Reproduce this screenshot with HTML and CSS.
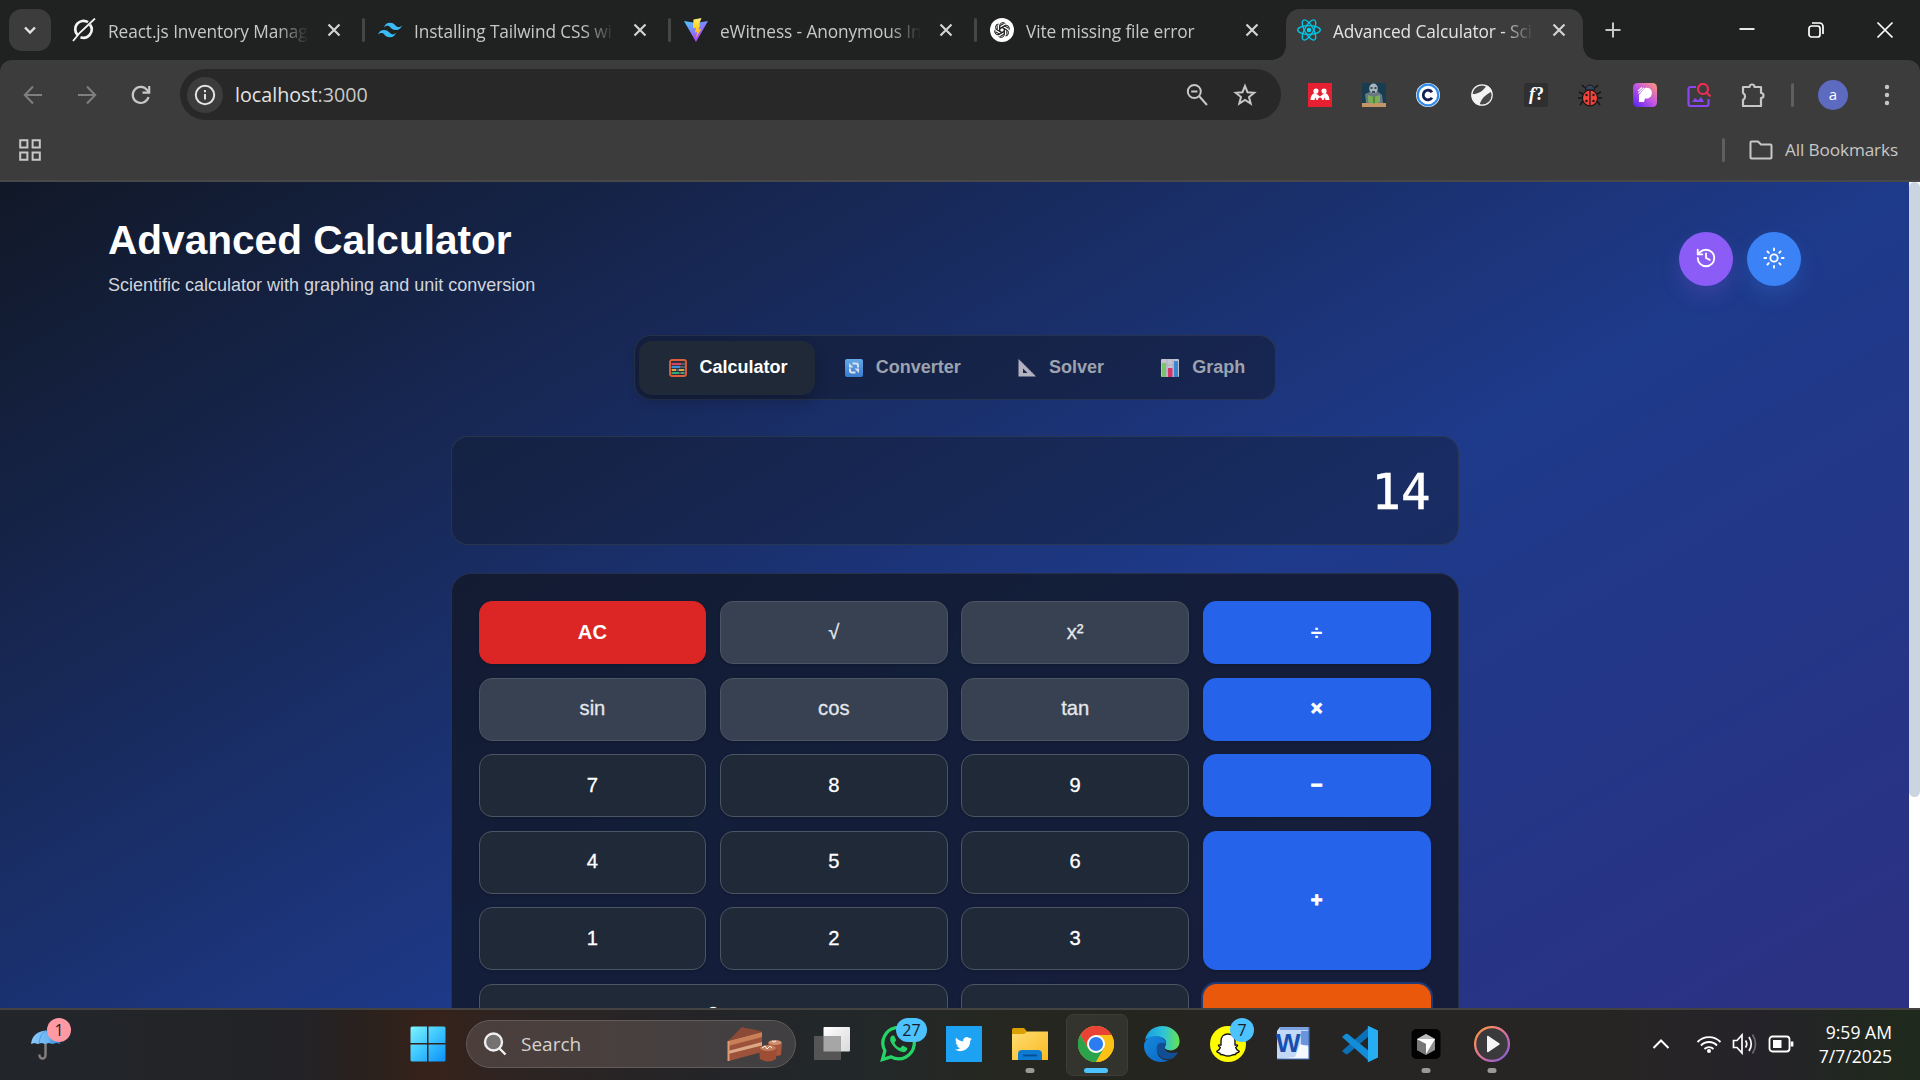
FILE: index.html
```html
<!DOCTYPE html>
<html lang="en">
<head>
<meta charset="utf-8">
<title>Advanced Calculator</title>
<link rel="stylesheet" href="styles.css">
</head>
<body>
<div class="screen">
  <header class="browser">
    <div class="tabstrip">
      <div class="tab-search"><svg width="16" height="16" viewBox="0 0 16 16" fill="none" stroke="#e3e3e3" stroke-width="2.4"><path d="M3 5.5l5 5 5-5"/></svg></div>
      <div class="tab">
        <svg class="favicon" viewBox="0 0 24 24" fill="none" stroke="#f4f4f4" stroke-width="2.7"><path d="M18 6.6a8.3 8.3 0 0 1-9.5 12.7M5.6 17A8.3 8.3 0 0 1 16 4.2"/><path d="M1 23L8 14.500 23 0.500" stroke-width="1.8"/></svg>
        <span class="tab-title">React.js Inventory Manag</span>
        <svg class="close" viewBox="0 0 24 24"><path d="M6.500 6.500l11 11m0-11l-11 11"/></svg>
      </div>
      <div class="tab">
        <svg class="favicon" viewBox="0 0 24 24" fill="#38bdf8"><path d="M12 4.800c-3.200 0-5.200 1.600-6 4.800 1.200-1.600 2.600-2.200 4.200-1.800.9.2 1.600.9 2.300 1.700 1.200 1.200 2.600 2.600 5.500 2.600 3.200 0 5.200-1.600 6-4.800-1.200 1.600-2.600 2.200-4.200 1.800-.9-.2-1.600-.9-2.300-1.700-1.200-1.200-2.600-2.600-5.500-2.600zM6 12c-3.200 0-5.200 1.600-6 4.800 1.200-1.600 2.600-2.200 4.200-1.800.9.2 1.600.9 2.300 1.700 1.200 1.200 2.600 2.600 5.500 2.600 3.200 0 5.200-1.600 6-4.800-1.200 1.600-2.600 2.200-4.200 1.800-.9-.2-1.600-.9-2.300-1.700C10.300 13.400 8.900 12 6 12z"/></svg>
        <span class="tab-title">Installing Tailwind CSS wi</span>
        <svg class="close" viewBox="0 0 24 24"><path d="M6.500 6.500l11 11m0-11l-11 11"/></svg>
      </div>
      <div class="tab">
        <svg class="favicon" viewBox="0 0 24 24"><defs><linearGradient id="vite" x1="0" y1="0" x2=".6" y2="1"><stop offset="0" stop-color="#41d1ff"/><stop offset="1" stop-color="#bd34fe"/></linearGradient><linearGradient id="bolt" x1="0" y1="0" x2="0" y2="1"><stop offset="0" stop-color="#ffea83"/><stop offset=".3" stop-color="#ffdd35"/><stop offset="1" stop-color="#ffa800"/></linearGradient></defs><path d="M0 3l12 21L24 3l-12 2z" fill="url(#vite)"/><path d="M17.500 0L9.500 1.600 9 10.300l3-.5-1 4.800 2.300-.6-1.500 6L17.300 11l-2.800.5L16 6.800l-1-.2z" fill="url(#bolt)"/></svg>
        <span class="tab-title">eWitness - Anonymous In</span>
        <svg class="close" viewBox="0 0 24 24"><path d="M6.500 6.500l11 11m0-11l-11 11"/></svg>
      </div>
      <div class="tab tab-last">
        <svg class="favicon" viewBox="0 0 24 24"><circle cx="12" cy="12" r="12" fill="#fff"/><g fill="none" stroke="#222" stroke-width="1"><path id="petal" d="M9.600 13.400V7.600a3.300 3.300 0 0 1 6-1.600M12 9.500l4.800 2.800v4.500"/><use href="#petal" transform="rotate(60 12 12)"/><use href="#petal" transform="rotate(120 12 12)"/><use href="#petal" transform="rotate(180 12 12)"/><use href="#petal" transform="rotate(240 12 12)"/><use href="#petal" transform="rotate(300 12 12)"/></g></svg>
        <span class="tab-title">Vite missing file error</span>
        <svg class="close" viewBox="0 0 24 24"><path d="M6.500 6.500l11 11m0-11l-11 11"/></svg>
      </div>
      <div class="tab tab-active">
        <svg class="favicon" viewBox="0 0 24 24" fill="none" stroke="#00c8e6" stroke-width="1.300"><circle cx="12" cy="12" r="2.200" fill="#00d8ff" stroke="none"/><ellipse cx="12" cy="12" rx="11.300" ry="4.300"/><ellipse cx="12" cy="12" rx="11.300" ry="4.300" transform="rotate(60 12 12)"/><ellipse cx="12" cy="12" rx="11.300" ry="4.300" transform="rotate(120 12 12)"/></svg>
        <span class="tab-title">Advanced Calculator - Sci</span>
        <svg class="close" viewBox="0 0 24 24"><path d="M6.500 6.500l11 11m0-11l-11 11"/></svg>
      </div>
      <svg class="new-tab" width="24" height="24" viewBox="0 0 24 24" stroke="#c7c7c7" stroke-width="2"><path d="M12 4.500v15M4.500 12h15"/></svg>
      <div class="win-controls">
        <svg width="20" height="20" viewBox="0 0 20 20" fill="none" stroke="#fff" stroke-width="1.800"><path d="M2.500 9h15"/></svg>
        <svg width="20" height="20" viewBox="0 0 20 20" fill="none" stroke="#fff" stroke-width="1.700"><rect x="3" y="6" width="11" height="11" rx="2.500"/><path d="M6 3h7.500a3.500 3.500 0 0 1 3.500 3.500V14"/></svg>
        <svg width="20" height="20" viewBox="0 0 20 20" fill="none" stroke="#fff" stroke-width="1.700"><path d="M2.500 2.500l15 15m0-15l-15 15"/></svg>
      </div>
    </div>
    <div class="toolbar">
      <div class="address-row">
        <div class="nav-buttons">
          <svg width="24" height="24" viewBox="0 0 24 24" fill="none" stroke="#7f7f7f" stroke-width="2"><path d="M21 12H4M12 3.500L3.800 12l8.200 8.500"/></svg>
          <svg width="24" height="24" viewBox="0 0 24 24" fill="none" stroke="#7f7f7f" stroke-width="2"><path d="M3 12h17M12 3.500l8.200 8.500-8.200 8.500"/></svg>
          <svg width="24" height="24" viewBox="0 0 24 24" fill="none" stroke="#c7c7c7" stroke-width="2.200"><path d="M19.500 14a8 8 0 1 1-1.300-6.800l1.500 2"/><path d="M20.200 3v6.600h-6.700"/></svg>
        </div>
        <div class="omnibox">
          <span class="site-info"><svg width="22" height="22" viewBox="0 0 22 22" fill="none" stroke="#e3e3e3" stroke-width="2"><circle cx="11" cy="11" r="9.200"/><path d="M11 10v5.500M11 6v2.200"/></svg></span>
          <span class="url">localhost<span class="port">:3000</span></span>
          <svg class="zoom-icon" width="24" height="24" viewBox="0 0 24 24" fill="none" stroke="#c7c7c7" stroke-width="2"><circle cx="9.300" cy="8.500" r="6.500"/><path d="M6.200 8.500h6.200M14 13l8 9"/></svg>
          <svg width="24" height="24" viewBox="0 0 24 24" fill="none" stroke="#c7c7c7" stroke-width="2"><path d="M12 3l2.500 6.200 6.700.5-5.200 4.300 1.700 6.600L12 17l-5.700 3.600L8 14 2.800 9.700l6.700-.5z"/></svg>
        </div>
        <div class="extensions">
          <svg viewBox="0 0 24 24"><rect width="24" height="24" fill="#e61f31"/><g fill="#fff"><circle cx="8" cy="8" r="2.600"/><circle cx="16" cy="8" r="2.600"/><path d="M2.500 17c.3-4 2-7 5-7l4.500 3.500 4.500-3.500c3 0 4.700 3 5 7h-4l-.8-2.500-1.200 2.500h-7l-1.200-2.500L6.500 17z"/></g><circle cx="12" cy="9.800" r="1.700" fill="#e61f31"/><path d="M9.800 17.200c0-3.500 4.400-3.500 4.400 0z" fill="#e61f31"/></svg>
          <svg viewBox="0 0 24 24"><rect width="24" height="24" fill="#183c50"/><path d="M0 20h24v4H0z" fill="#c69566"/><path d="M3 11l7-3h5l5 4 1 8H4z" fill="#687884"/><ellipse cx="11.500" cy="5.500" rx="4.300" ry="5" fill="#a5b4bd"/><path d="M8.500 5h2m2 0h2M10 9h3" stroke="#182630" stroke-width="1.400"/><path d="M6 12l6 2 6-2v7l-6 2-6-2z" fill="#7aae56"/><path d="M12 14v6" stroke="#315e2a"/></svg>
          <svg viewBox="0 0 24 24"><circle cx="12" cy="12" r="12" fill="#fff"/><circle cx="12" cy="12" r="10.300" fill="#fff" stroke="#2f8ced" stroke-width="2.200"/><path d="M16 9.300a4.800 4.800 0 1 0 0 5.400" fill="none" stroke="#14204f" stroke-width="2.800"/></svg>
          <svg viewBox="0 0 24 24"><circle cx="12" cy="12" r="10.200" fill="#484848" stroke="#f3f3f3" stroke-width="1.200"/><path d="M1.500 11C7 11.500 13 9 16.500 2.300a10.700 10.700 0 0 1 5.500 6.200C15 12 11 16 9.500 22.400A10.700 10.700 0 0 1 1.500 11z" fill="#f3f3f3"/></svg>
          <span class="fx"><i>f</i>?</span>
          <svg viewBox="0 0 24 24"><path d="M7 5L4 2m13 3l3-3M5 11l-4-2m18 2l4-2M4 15H0m20 0h4M5 18l-3 4m17-4l3 4" stroke="#161616" stroke-width="1.600"/><path d="M7.500 7a4.500 5 0 0 1 9 0z" fill="#344461" stroke="#151515"/><ellipse cx="12" cy="15" rx="7.600" ry="8" fill="#f5433e" stroke="#151515" stroke-width="1.200"/><path d="M12 7v16" stroke="#151515" stroke-width="1.200"/><g fill="#181818"><circle cx="8.500" cy="12" r="1.200"/><circle cx="15.500" cy="12" r="1.200"/><circle cx="8.500" cy="18" r="1.200"/><circle cx="15.500" cy="18" r="1.200"/></g></svg>
          <svg viewBox="0 0 24 24"><defs><linearGradient id="pinkish" x1="0" y1="1" x2="1" y2="0"><stop offset="0" stop-color="#5321f5"/><stop offset=".5" stop-color="#c155e5"/><stop offset="1" stop-color="#ff9873"/></linearGradient></defs><rect width="24" height="24" rx="4.500" fill="url(#pinkish)"/><path d="M6 12l6-7c5-1 8 3 6.500 7-1 3-4 4-6.500 3.500L11 19H6z" fill="#fff"/><path d="M5 8l4-3.500M5.500 10.500L11 5" stroke="#fff" stroke-width="1.200"/></svg>
          <svg viewBox="0 0 24 24" fill="none" stroke-width="2.200"><path d="M9 4H3.500A2 2 0 0 0 1.500 6v15a2 2 0 0 0 2 2h16a2 2 0 0 0 2-2v-5" stroke="#8b45f5"/><path d="M5 19l3-4 3 2.500 3-3.500 3 5z" fill="#8b45f5"/><circle cx="16" cy="6" r="5" stroke="#f32a55"/><path d="M19.500 9.500l4 4" stroke="#f32a55"/></svg>
          <svg viewBox="0 0 24 24" fill="none" stroke="#c7c7c7" stroke-width="2.200" stroke-linejoin="round"><path d="M2 4h6.500a2.500 2.500 0 0 1 5 0H20v6a2.500 2.500 0 0 1 0 5v8H2v-6a4 4 0 0 0 0-7z"/></svg>
        </div>
        <span class="vbar"></span>
        <span class="avatar">a</span>
        <svg class="menu" width="6" height="24" viewBox="0 0 6 24" fill="#c7c7c7"><circle cx="3" cy="4" r="2.200"/><circle cx="3" cy="12" r="2.200"/><circle cx="3" cy="20" r="2.200"/></svg>
      </div>
      <div class="bookmarks">
        <svg width="22" height="22" viewBox="0 0 22 22" fill="none" stroke="#c7c7c7" stroke-width="2"><path d="M1.200 1.200h7.200v7.200H1.200zM13.600 1.200h7.200v7.200h-7.200zM1.200 13.600h7.200v7.200H1.200zM13.600 13.600h7.200v7.200h-7.200z"/></svg>
        <span class="vbar push"></span>
        <svg class="folder" width="24" height="20" viewBox="0 0 24 20" fill="none" stroke="#c7c7c7" stroke-width="2" stroke-linejoin="round"><path d="M1.500 2.500a1 1 0 0 1 1-1h6.500l3 3h9.500a1 1 0 0 1 1 1v12a1 1 0 0 1-1 1h-19a1 1 0 0 1-1-1z"/></svg>
        <span class="all-bookmarks">All Bookmarks</span>
      </div>
    </div>
  </header>

  <div class="viewport">
    <main class="app">
      <div class="app-header">
        <div>
          <h1>Advanced Calculator</h1>
          <p class="subtitle">Scientific calculator with graphing and unit conversion</p>
        </div>
        <div class="actions">
          <button class="round history"><svg viewBox="0 0 24 24"><path d="M3 12a9 9 0 1 0 9-9 9.750 9.750 0 0 0-6.740 2.740L3 8"/><path d="M3 3v5h5M12 7v5l4 2"/></svg></button>
          <button class="round theme"><svg viewBox="0 0 24 24"><circle cx="12" cy="12" r="4"/><path d="M12 1.500v2M12 20.500v2M4.900 4.900l1.400 1.400M17.700 17.700l1.400 1.400M1.500 12h2M20.500 12h2M6.300 17.700l-1.400 1.400M19.100 4.900l-1.400 1.400"/></svg></button>
        </div>
      </div>
      <nav class="modes">
        <div class="mode mode-active"><svg viewBox="0 0 18 18"><rect x="1" y="1" width="16" height="16" rx="2" fill="#25303c" stroke="#f4633a" stroke-width="1.900"/><path d="M2 5h14M2 8h14M2 11h14M2 14h14" stroke="#8a8f9b"/><g stroke-width="2.200"><path d="M3 5h9" stroke="#e8476a"/><path d="M3 8h8" stroke="#3c9ce8"/><path d="M3 11h4m3 0h5" stroke="#f6b53c"/><path d="M3 14h7m2 0h3" stroke="#35b878"/></g></svg>Calculator</div>
        <div class="mode"><svg viewBox="0 0 18 18"><defs><linearGradient id="sq" x2="0" y2="1"><stop stop-color="#6db8fb"/><stop offset="1" stop-color="#3f86dd"/></linearGradient></defs><rect width="18" height="18" rx="2" fill="url(#sq)"/><path d="M13 8.500V6.500a2 2 0 0 0-2-2H7.500M5 9.500v2a2 2 0 0 0 2 2h3.500" fill="none" stroke="#f2f6ff" stroke-width="2"/><path d="M4 4v4.500h4.500zM14 14V9.500H9.500z" fill="#f2f6ff"/></svg>Converter</div>
        <div class="mode"><svg viewBox="0 0 18 18"><path d="M0.500 0l17.500 17.500H0.500zM5 9.500V14h4.500z" fill="#c4c2cd" fill-rule="evenodd"/><path d="M3 2.500l13 13" stroke="#9a92b5" stroke-width="1" stroke-dasharray="1 1.500"/></svg>Solver</div>
        <div class="mode"><svg viewBox="0 0 18 18"><rect width="18" height="18" rx="1" fill="#d6d4df"/><path d="M0 6h18M0 12h18M6 0v18M12 0v18" stroke="#b3b0c2" stroke-width=".6"/><path d="M1 4h4v14H1z" fill="#86d56c"/><path d="M7 9h4.500v9H7z" fill="#e8386b"/><path d="M13 2h4v16h-4z" fill="#3d92df"/></svg>Graph</div>
      </nav>
      <section class="display">14</section>
      <section class="keypad">
        <button class="key clear">AC</button><button class="key fn">√</button><button class="key fn">x²</button><button class="key op divide">÷</button>
        <button class="key fn">sin</button><button class="key fn">cos</button><button class="key fn">tan</button><button class="key op">×</button>
        <button class="key">7</button><button class="key">8</button><button class="key">9</button><button class="key op">−</button>
        <button class="key">4</button><button class="key">5</button><button class="key">6</button><button class="key op tall">+</button>
        <button class="key">1</button><button class="key">2</button><button class="key">3</button>
        <button class="key wide">0</button><button class="key">.</button><button class="key equals">=</button>
      </section>
    </main>
    <div class="scrollbar"><div class="thumb"></div></div>
  </div>

  <footer class="taskbar">
    <div class="weather">
      <svg width="34" height="34" viewBox="0 0 34 34"><defs><linearGradient id="umb"><stop stop-color="#8ccaf8"/><stop offset=".6" stop-color="#69b4f2"/><stop offset="1" stop-color="#1479dd"/></linearGradient></defs><path d="M15.500 14v14.500a3 3 0 0 1-6 0v-1" fill="none" stroke="#85807f" stroke-width="2.400"/><path d="M1 17C2 8 8 4.500 15.500 3.500 24 4.500 29 9 30.500 17l-4-1-4 1-3.500-1-4 1-3.500-1-4 1-3-1z" fill="url(#umb)"/><path d="M15.500 4c-5 3-6 8-6 12m6-12c4 3 6 8 6 12" fill="none" stroke="#4b9ce4"/></svg>
      <span class="badge pink">1</span>
    </div>
    <svg class="start" width="36" height="36" viewBox="0 0 36 36"><defs><linearGradient id="win" x1="0" y1="0" x2="36" y2="36" gradientUnits="userSpaceOnUse"><stop stop-color="#80f5ff"/><stop offset=".5" stop-color="#3cc5ff"/><stop offset="1" stop-color="#0b8ffa"/></linearGradient></defs><path d="M2 .5h15v16.500H.5V2A1.500 1.500 0 0 1 2 .5zM18.500.5H34A1.500 1.500 0 0 1 35.500 2v15h-17zM.5 18.500H17v17H2A1.500 1.500 0 0 1 .5 34zM18.500 18.500h17V34a1.500 1.500 0 0 1-1.500 1.500H18.500z" fill="url(#win)"/></svg>
    <div class="search">
      <svg width="24" height="24" viewBox="0 0 24 24" fill="#757170" stroke="#f0f0f0" stroke-width="2.400"><circle cx="10.500" cy="10" r="8.500"/><path d="M16.500 16.500l6 6"/></svg>
      <span>Search</span>
      <svg class="cake" width="56" height="36" viewBox="0 0 56 36"><path d="M1 15L35 6v20L2 35z" fill="#9c523b"/><path d="M1 15l34-9v5L1 20z" fill="#c98059"/><path d="M1 25l34-9v3.500L1 28z" fill="#dba886"/><path d="M1 15L15 1c6 2 14 2 20 5z" fill="#8b4936"/><path d="M1.500 15v20" stroke="#e09a73" stroke-width="2"/><path d="M41 17q7-4 14 0l-1 12q-6 2-12 0z" fill="#a9573c"/><ellipse cx="48" cy="16.500" rx="6.500" ry="2.500" fill="#cf9271"/><path d="M32 23q8-5 18 0l-1 10q-8 5-16 0z" fill="#9f4e36"/><ellipse cx="41" cy="22" rx="8" ry="3" fill="#c07c5c"/><path d="M35 22l3-2 2 3 3-3 2 2m0-7l2 1 2-1" fill="none" stroke="#fff0df"/></svg>
    </div>
    <div class="apps">
      <div class="app-slot"><svg viewBox="0 0 36 36"><defs><linearGradient id="tv" x2="1" y2="1"><stop stop-color="#fff"/><stop offset="1" stop-color="#d9d9d9"/></linearGradient></defs><rect x="9.500" y="1" width="26.500" height="24.500" rx="1" fill="url(#tv)"/><rect x="0" y="10" width="27" height="24" rx="1" fill="#555"/><path d="M9.500 10H27v15.500H9.500z" fill="#a6a6a6"/></svg></div>
      <div class="app-slot"><svg viewBox="0 0 36 36"><path d="M2.500 33.500l2.400-8.700a15.700 15.700 0 1 1 6.200 6.100z" fill="none" stroke="#25d366" stroke-width="3.300"/><path d="M12.600 9.500c-2.500 1-3.200 4-1.500 7 2.500 4.500 6.500 8.500 11.500 9.600 3 .5 4.500-1 4.700-4l-4.600-2.500-2.500 2.500c-2.800-1-4.700-3-5.800-5.400l1.800-2.400-2-4.500z" fill="#25d366"/></svg><span class="badge blue b27">27</span></div>
      <div class="app-slot"><svg viewBox="0 0 36 36"><path d="M0 0h36v36H0z" fill="#1da1f2"/><path d="M26 12.700c-.6.300-1.300.5-2 .6.700-.4 1.200-1.100 1.500-1.900-.7.400-1.400.7-2.200.8a3.500 3.500 0 0 0-6 3.200c-2.900-.2-5.400-1.500-7.100-3.600a3.500 3.500 0 0 0 1.100 4.700c-.6 0-1.100-.2-1.600-.4 0 1.700 1.200 3.100 2.800 3.400-.5.100-1 .1-1.600 0 .5 1.400 1.800 2.400 3.300 2.500A7 7 0 0 1 9 23.500a10 10 0 0 0 15.300-8.900c.7-.5 1.300-1.100 1.700-1.900z" fill="#fff"/></svg></div>
      <div class="app-slot"><svg viewBox="0 0 36 36"><defs><linearGradient id="fold" x2="1" y2="1"><stop stop-color="#ffdc71"/><stop offset="1" stop-color="#f9ba22"/></linearGradient></defs><path d="M0 3.500A1.500 1.500 0 0 1 1.500 2H12l3 3.500V12H0z" fill="#dba000"/><path d="M0 8h12l3.500-2.500H36V34H0z" fill="url(#fold)"/><path d="M6 28a4 4 0 0 1 4-4h16a4 4 0 0 1 4 4v6H6z" fill="#0d7bd2"/><path d="M11 29.500h14" stroke="#084b91" stroke-width="1.800"/></svg><i class="dot"></i></div>
      <div class="app-slot current"><svg viewBox="0 0 36 36"><circle cx="18" cy="18" r="18" fill="#fbc116"/><path d="M2.400 9A18 18 0 0 1 33.600 9H18L10.200 22.500z" fill="#ea4335"/><path d="M2.400 9A18 18 0 0 0 18 36l8-13.500H10.200z" fill="#2ba24c"/><path d="M33.600 9A18 18 0 0 1 18 36l7.800-13.500L18 9z" fill="#fbc116"/><circle cx="18" cy="18" r="9" fill="#fff"/><circle cx="18" cy="18" r="7.100" fill="#2b7cf0"/></svg><i class="bar"></i></div>
      <div class="app-slot"><svg viewBox="0 0 36 36"><defs><linearGradient id="edge1" x2="1"><stop stop-color="#159ce1"/><stop offset=".55" stop-color="#30c4d7"/><stop offset="1" stop-color="#68e34c"/></linearGradient><linearGradient id="edge2" y2="1"><stop stop-color="#1689dc"/><stop offset="1" stop-color="#0b66c5"/></linearGradient></defs><path d="M1 14C4-2 26-5 34 9c5 11-3 17-10 15-4-1-4-3-2-6 1-5-5-8-10-7C7 11 3 12 1 14z" fill="url(#edge1)"/><path d="M0 20c0-6 5-10 12-10 6 0 10 4 10 8-4-2-9 0-9 6 0 7 6 11 12 10C14 40 0 32 0 20z" fill="url(#edge2)"/><path d="M13 20c-2 8 5 15 14 13 3-1 6-4 7-7-5 2-10 1-13-2-1-2 0-3 1-5-3-3-7-3-9 1z" fill="#114e94"/></svg></div>
      <div class="app-slot"><svg viewBox="0 0 36 36"><circle cx="18" cy="18" r="18" fill="#fffc00"/><path d="M18 8c4.500 0 7 3 7 7v4c.8.200 2-.5 2.500.2.600 1-1.500 1.600-1.800 2.300.4 1.500 1.500 3 3.500 3.800-.2 1.300-2 1.500-3 1.800l-.7 1.400c-3-.5-3.500 1.500-7.500 1.500s-4.500-2-7.500-1.500l-.7-1.400c-1-.3-2.800-.5-3-1.800 2-.8 3.100-2.300 3.500-3.800-.3-.7-2.400-1.300-1.800-2.300.5-.7 1.700 0 2.500-.2v-4c0-4 2.500-7 7-7z" fill="#fff" stroke="#161616" stroke-width="1.400"/></svg><span class="badge blue b7">7</span></div>
      <div class="app-slot"><svg viewBox="0 0 36 36"><path d="M4 1h29v22l-3 10H1V5z" fill="#c3d7f6"/><path d="M4 1h29v3H4z" fill="#7ba2df"/><path d="M25 5h8v14h-8z" fill="#6d96da"/><path d="M2 33h31V21l-9-3-5 13z" fill="#f6f9ff"/><path d="M33 1v32H1" fill="none" stroke="#3f6fbd" stroke-width="1.200"/><text x="0" y="26" font-family="Liberation Sans, sans-serif" font-size="26" font-weight="bold" fill="#164fae">W</text></svg></div>
      <div class="app-slot"><svg viewBox="0 0 36 36"><path d="M0 25l3.500 3c1 .5 2 .3 3-.5L27 10V1z" fill="#0b70b7"/><path d="M0 11l3.500-3c1-.5 2-.3 3 .5L27 25v10z" fill="#138dd7"/><path d="M26.500 0L36 4.500v27L26.500 36c-.8 0-1.200-1-.5-1.800V1.800C25.300 1 25.700 0 26.500 0z" fill="#27adf3"/></svg></div>
      <div class="app-slot"><svg viewBox="0 0 36 36"><rect x="3.500" y="3" width="29" height="30" rx="5" fill="#020202"/><path d="M18 8l9 5v11l-9 5-9-5V13z" fill="#8e8e8e"/><path d="M9 13l9-5 9 5-9 4z" fill="#b9b9b9"/><path d="M9 13h18l-9 15V18z" fill="#fff"/><path d="M9 14v10l9 5V18z" fill="#777"/></svg><i class="dot"></i></div>
      <div class="app-slot"><svg viewBox="0 0 36 36"><defs><linearGradient id="play" x1="0" y1="0" x2="1" y2="1"><stop stop-color="#ff9b32"/><stop offset=".5" stop-color="#e3729a"/><stop offset="1" stop-color="#7859e0"/></linearGradient></defs><circle cx="18" cy="18" r="16.900" fill="#3a3a3d" stroke="url(#play)" stroke-width="2.300"/><path d="M13 10.500c0-.8.800-1 1.400-.6l10.800 7.300c.6.400.6 1.200 0 1.600l-10.800 7.300c-.6.400-1.400.1-1.400-.6z" fill="#f5f5f5"/></svg><i class="dot"></i></div>
    </div>
    <div class="tray">
      <svg class="chevron" width="18" height="12" viewBox="0 0 18 12" fill="none" stroke="#fff" stroke-width="2"><path d="M1.500 10L9 2.500l7.500 7.500"/></svg>
      <svg width="26" height="20" viewBox="0 0 26 20" fill="none" stroke="#fff" stroke-width="1.900"><path d="M1.500 8a16 16 0 0 1 23 0M5 11.500a11 11 0 0 1 16 0M8.500 15a6.300 6.300 0 0 1 9 0"/><circle cx="13" cy="17" r="2" fill="#fff" stroke="none"/></svg>
      <svg class="volume" width="26" height="22" viewBox="0 0 26 22" fill="none" stroke="#fff" stroke-width="1.700"><path d="M1.500 7.500h3.500l5-5.500v18l-5-5.500H1.500zM13.500 7.500q2.500 3.500 0 7M17 4q4.500 7 0 14"/><path d="M20.500 1.500q6 9.500 0 19" stroke="#6d6b6b"/></svg>
      <svg width="26" height="18" viewBox="0 0 26 18" fill="none" stroke="#fff" stroke-width="1.800"><rect x="1.500" y="1.500" width="20" height="15" rx="3"/><path d="M5 5h8.500v8H5z" fill="#fff" stroke="none"/><path d="M24 6.500v5" stroke-width="2.800"/></svg>
      <div class="clock"><span>9:59 AM</span><span>7/7/2025</span></div>
    </div>
  </footer>
</div>
</body>
</html>
```
FILE: styles.css
```css
* { box-sizing: border-box; }
body { margin: 0; background: #202221; font-family: "Open Sans", "Noto Sans", sans-serif; }
svg { display: block; flex: none; }
.screen { width: 1920px; height: 1080px; display: flex; flex-direction: column; overflow: hidden; }

/* Browser chrome */
.browser { flex: none; height: 182px; background: #202221; }
.tabstrip { height: 60px; display: flex; align-items: center; padding-left: 9px; }
.tab-search { width: 42px; height: 42px; margin-right: 9px; border-radius: 13px; background: #3c3c3c; display: grid; place-items: center; }
.tab { position: relative; width: 306px; height: 51px; margin-top: 9px; padding: 0 0 9px 12px; display: flex; align-items: center; flex: none; }
.favicon { width: 24px; height: 24px; margin-right: 12px; }
.tab-title { width: 203px; flex: none; white-space: nowrap; font-size: 17.3px; letter-spacing: -.1px; line-height: 26px; padding-top: 4px; color: #c7c7c7; -webkit-mask-image: linear-gradient(90deg, #000 83%, transparent 99%); mask-image: linear-gradient(90deg, #000 83%, transparent 99%); }
.close { width: 24px; height: 24px; margin-left: 11px; stroke: #d3d3d3; stroke-width: 2.2; fill: none; }
.tab::after { content: ""; width: 3px; height: 24px; margin-left: 16px; flex: none; background: #454646; border-radius: 2px; }
.tab-last::after { visibility: hidden; }
.tab-active { width: 297px; margin-left: 2px; padding-left: 11px; background: #3c3c3c; border-radius: 14px 14px 0 0; }
.tab-active .tab-title { color: #e3e3e3; }
.tab-active::before, .tab-active::after { content: ""; position: absolute; bottom: 0; width: 14px; height: 14px; margin: 0; border-radius: 0; }
.tab-active::before { left: -14px; background: radial-gradient(circle at 0 0, transparent 13.5px, #3c3c3c 14px); }
.tab-active::after { right: -14px; background: radial-gradient(circle at 100% 0, transparent 13.5px, #3c3c3c 14px); }
.new-tab { margin-left: 18px; }
.win-controls { margin-left: auto; display: flex; gap: 49px; padding-right: 25px; }

.toolbar { height: 122px; background: #3c3c3c; border-bottom: 2px solid #484848; border-radius: 12px 12px 0 0; }
.address-row { height: 69px; display: flex; align-items: center; padding-left: 21px; }
.nav-buttons { display: flex; gap: 30px; width: 159px; }
.omnibox { width: 1101px; height: 51px; border-radius: 26px; background: #282828; display: flex; align-items: center; padding: 0 24px 0 7px; }
.site-info { width: 36px; height: 36px; border-radius: 50%; background: #3c3c3c; display: grid; place-items: center; margin-right: 12px; }
.url { font-size: 19.7px; color: #e3e3e3; line-height: 26px; }
.port { color: #c7c7c7; }
.zoom-icon { margin-left: auto; margin-right: 24px; }
.extensions { display: flex; gap: 30.1px; margin-left: 27px; width: 458px; }
.extensions svg, .fx { width: 24px; height: 24px; flex: none; }
.fx { background: #2f2f2f; border-radius: 3px; color: #fff; font: bold 18px/22px "Liberation Serif", serif; text-align: center; }
.vbar { width: 3px; height: 24px; border-radius: 2px; background: #5f5f5f; flex: none; }
.extensions + .vbar { margin-left: 25px; }
.avatar { width: 30px; height: 30px; margin-left: 24px; border-radius: 50%; background: #5c6bc0; color: #fff; font-size: 15px; line-height: 29px; text-align: center; }
.menu { margin-left: 36px; }
.bookmarks { height: 41px; display: flex; align-items: center; padding: 0 22px 0 19px; }
.bookmarks .push { margin-left: auto; }
.folder { margin: 0 12px 0 24px; }
.all-bookmarks { font-size: 17.2px; letter-spacing: -.12px; color: #c7c7c7; line-height: 24px; white-space: nowrap; }

/* Calculator page */
.viewport { height: 826px; flex: none; display: flex; overflow: hidden; font-family: "Liberation Sans", Arial, sans-serif; }
.app { width: 1909px; height: 1108px; padding: 33px 108px 0; background: linear-gradient(to bottom right, #111827, #1e3a8a, #312e81); display: flex; flex-direction: column; align-items: center; }
.scrollbar { width: 11px; background: #fff; }
.thumb { height: 615px; background: #cbd5e1; border-radius: 6px; }
.app-header { width: 100%; height: 88px; display: flex; align-items: center; justify-content: space-between; }
h1 { margin: -4px 0 8px; font-size: 40.6px; line-height: 48px; color: #fff; }
.subtitle { margin: 0; font-size: 18px; line-height: 27px; color: #d1d5db; }
.actions { display: flex; gap: 14px; }
.round { width: 54px; height: 54px; padding: 0 0 2px; border: 0; border-radius: 50%; display: grid; place-items: center; }
.round svg { width: 22px; height: 22px; fill: none; stroke: #fff; stroke-width: 2; stroke-linecap: round; stroke-linejoin: round; }
.history { background: #8b5cf6; box-shadow: 0 10px 20px rgba(139, 92, 246, .22); }
.theme { background: #3b82f6; box-shadow: 0 10px 20px rgba(59, 130, 246, .22); }
.modes { margin-top: 32px; width: 642px; height: 65px; padding: 5px 4px; display: flex; border: 1px solid rgba(55, 65, 81, .55); border-radius: 17px; background: rgba(17, 24, 39, .5); }
.mode { height: 54px; padding: 0 27.2px 1px 30px; display: flex; align-items: center; gap: 13px; color: #9ca3af; font-size: 18px; font-weight: bold; border-radius: 13px; }
.mode svg { width: 18px; height: 18px; opacity: .9; }
.mode-active { color: #fff; background: #1f2937; box-shadow: 0 6px 14px rgba(0, 0, 0, .2); }
.display { margin-top: 36px; width: 1008px; height: 109px; padding: 0 27px; border: 1px solid rgba(55, 65, 81, .6); border-radius: 17px; background: rgba(17, 24, 39, .4); color: #fff; font: 49px/111px "DejaVu Sans Mono", monospace; text-align: right; -webkit-text-stroke: .5px #fff; }
.keypad { margin-top: 28px; width: 1008px; padding: 27px; border: 1px solid #26304a; border-radius: 20px; background: rgba(17, 24, 39, .8); display: grid; grid-template-columns: repeat(4, 1fr); grid-auto-rows: 63px; gap: 13.5px; }
.key { border: 1px solid #4b5563; border-radius: 13px; background: #1f2937; color: #fff; padding: 0 0 1px; font: 20.2px/1 "Liberation Sans", Arial, sans-serif; -webkit-text-stroke: .3px; box-shadow: 0 1px 3px rgba(0, 0, 0, .2); }
.fn { background: #374151; color: #e5e7eb; }
.clear { background: #dc2626; border-color: #dc2626; font-weight: bold; -webkit-text-stroke: 0; }
.op { background: #2563eb; border-color: #2563eb; font-weight: bold; -webkit-text-stroke: .9px; }
.divide { -webkit-text-stroke: 0; font-size: 21px; }
.tall { grid-row: span 2; }
.wide { grid-column: span 2; }
.equals { background: #ea580c; border-color: #ea580c; box-shadow: 0 0 0 2px #1e3a78; }

/* Windows taskbar */
.taskbar { height: 72px; flex: none; display: flex; align-items: center; padding-bottom: 2px; border-top: 2px solid #454341; color: #fff; background: linear-gradient(90deg, #22262a 0, #232327 300px, #2b211d 370px, #36221a 430px, #2c2423 530px, #242427 700px, #22282a 850px, #262721 1000px, #25251f 1130px, #272523 1250px, #272523 1600px, #252329 1760px, #20291d 1900px); }
.weather { position: relative; width: 380px; padding-left: 30px; margin-right: 30px; }
.badge { position: absolute; min-width: 24px; height: 24px; border-radius: 12px; color: #15202a; font-size: 16px; line-height: 24px; text-align: center; }
.pink { left: 47px; top: -9px; background: #ff99a4; }
.blue { background: #4cc2ff; }
.b27 { left: 31px; top: 7px; width: 31px; }
.b7 { left: 35px; top: 7px; }
.search { width: 330px; height: 48px; margin-left: 20px; padding: 0 14px 0 16px; display: flex; align-items: center; border: 1.5px solid #625b58; border-radius: 25px; background: linear-gradient(90deg, #4b3e3b, #48403f 50%, #403f42); color: #d7d2d0; font-size: 19px; }
.search span { margin-left: 14px; }
.cake { margin-left: auto; margin-right: -2px; }
.apps { display: flex; margin-left: 3px; width: 726px; }
.app-slot { position: relative; width: 66px; height: 66px; display: grid; place-items: center; flex: none; }
.app-slot > svg { width: 36px; height: 36px; }
.current::before { content: ""; position: absolute; left: 3px; top: 3px; width: 60px; height: 60px; border: 1px solid #3c3c38; border-radius: 7px; background: rgba(255, 255, 255, .065); }
.current > svg { position: relative; }
.dot, .bar { position: absolute; bottom: 4px; height: 5px; border-radius: 3px; left: 50%; transform: translateX(-50%); }
.dot { width: 9px; background: #9b9998; }
.bar { width: 24px; background: #4cc2ff; }
.tray { margin-left: auto; padding-right: 28px; display: flex; align-items: center; }
.chevron { margin-right: 26px; }
.volume { margin: 0 10px; }
.clock { width: 98px; display: flex; flex-direction: column; align-items: flex-end; font-size: 17.6px; line-height: 24px; white-space: nowrap; }
```
